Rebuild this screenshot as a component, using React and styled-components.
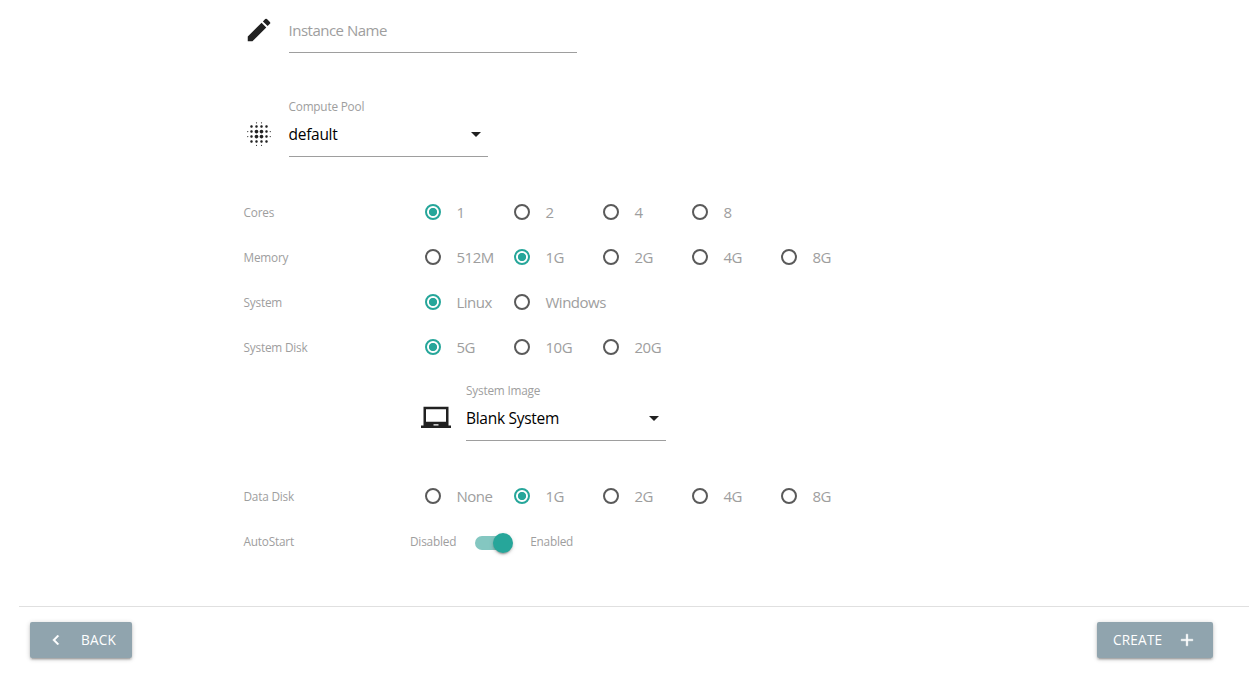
import React, { useState } from "react";
import styled, { createGlobalStyle } from "styled-components";
import { MdAdd, MdBlurOn, MdChevronLeft, MdEdit, MdLaptopChromebook } from "react-icons/md";

const GlobalStyle = createGlobalStyle`
  * { box-sizing: border-box; }
  body {
    margin: 0;
    background: #fff;
    color: #212121;
    font-family: "Open Sans", "Noto Sans", sans-serif;
    overflow: hidden;
  }
`;

const Page = styled.main`
  height: 682px;
  display: flex;
  flex-direction: column;
`;

const Form = styled.form`
  height: 606px;
  padding: 15px 0 0 243.5px;
  display: flex;
  flex-direction: column;
`;

const Field = styled.div`
  display: flex;
  align-items: flex-start;
  gap: 15px;
  height: ${(p) => p.$height}px;
  padding-top: ${(p) => p.$top || 0}px;
  padding-left: ${(p) => p.$indent || 0}px;

  > svg {
    width: 30px;
    height: 30px;
    flex: none;
    margin-top: ${(p) => p.$iconTop || 0}px;
  }
`;

const NameInput = styled.input`
  width: 288px;
  height: 38px;
  padding: 0 0 8px;
  border: 0;
  border-bottom: 1px solid #9e9e9e;
  outline: 0;
  background: transparent;
  font: 15px/20px "Open Sans", sans-serif;
  letter-spacing: -0.5px;
  &::placeholder { color: #9e9e9e; opacity: 1; }
`;

const SelectBox = styled.div`
  width: ${(p) => p.$width}px;
  height: 58px;
  border-bottom: 1px solid #9e9e9e;
`;

const Caption = styled.div`
  height: 16px;
  font-size: 11.8px;
  line-height: 14px;
  letter-spacing: -0.2px;
  color: #9e9e9e;
`;

const SelectValue = styled.div`
  display: flex;
  align-items: flex-start;
  justify-content: space-between;
  height: 24px;
  margin-top: 7px;
  font-size: 15.5px;
  line-height: 24px;
  letter-spacing: -0.28px;
  color: #000;
  svg { width: 24px; height: 24px; fill: #212121; }
`;

const Row = styled.div`
  display: flex;
  align-items: center;
  height: 45px;
`;

const RowLabel = styled.span`
  width: ${(p) => p.$width || 181.5}px;
  padding-bottom: 1px;
  font-size: 11.8px;
  line-height: 16px;
  letter-spacing: -0.2px;
  color: #9e9e9e;
`;

const Option = styled.label`
  display: flex;
  align-items: center;
  gap: 15.5px;
  width: 89px;
  font-size: 15px;
  line-height: 20px;
  white-space: nowrap;
  color: #9e9e9e;
  letter-spacing: -0.5px;
  > span { padding-bottom: 2px; }
`;

const Radio = styled.input`
  appearance: none;
  flex: none;
  width: 16px;
  height: 16px;
  margin: 0 0 2px;
  border: 2px solid #5a5a5a;
  border-radius: 50%;
  &:checked {
    border-color: #26a69a;
    background: radial-gradient(circle, #26a69a 3.7px, transparent 4.5px);
  }
`;

const SwitchText = styled.span`
  padding-bottom: 1px;
  font-size: 11.8px;
  line-height: 16px;
  letter-spacing: -0.2px;
  color: #9e9e9e;
`;

const SwitchTrack = styled.button`
  display: flex;
  align-items: center;
  justify-content: ${(p) => (p.$on ? "flex-end" : "flex-start")};
  width: 36px;
  height: 14px;
  margin: 2px 19px 0;
  padding: 0;
  border: 0;
  border-radius: 15px;
  background: ${(p) => (p.$on ? "#84c7c1" : "rgba(0,0,0,.38)")};
`;

const SwitchThumb = styled.span`
  flex: none;
  width: 20px;
  height: 20px;
  margin: 0 -2px;
  border-radius: 50%;
  background: ${(p) => (p.$on ? "#26a69a" : "#f1f1f1")};
  box-shadow: 0 3px 1px -2px rgba(0,0,0,.2), 0 2px 2px 0 rgba(0,0,0,.14), 0 1px 5px 0 rgba(0,0,0,.12);
`;

const Footer = styled.footer`
  display: flex;
  justify-content: space-between;
  margin-left: 19px;
  padding: 15px 36px 0 11px;
  border-top: 1px solid #e0e0e0;
`;

const Button = styled.button`
  display: flex;
  align-items: center;
  gap: 15px;
  width: ${(p) => p.$width}px;
  height: 36px;
  padding: 0 16px;
  border: 0;
  border-radius: 2px;
  background: #90a4ae;
  color: #fff;
  font: 13.6px/36px "Open Sans", sans-serif;
  letter-spacing: 0.2px;
  white-space: nowrap;
  box-shadow: 0 2px 2px 0 rgba(0,0,0,.14), 0 3px 1px -2px rgba(0,0,0,.12), 0 1px 5px 0 rgba(0,0,0,.2);
  svg { flex: none; width: 20px; height: 20px; }
  svg path[d^="M15"], svg path[d^="M19"] { stroke: #fff; stroke-width: 0.5px; }
`;

function Select({ label, value, width }) {
  return (
    <SelectBox $width={width}>
      <Caption>{label}</Caption>
      <SelectValue>
        {value}
        <svg viewBox="0 0 24 24"><path d="M7 10l5 5 5-5z" /></svg>
      </SelectValue>
    </SelectBox>
  );
}

function RadioRow({ label, options, initial }) {
  const [value, setValue] = useState(initial);
  return (
    <Row>
      <RowLabel>{label}</RowLabel>
      {options.map((o) => (
        <Option key={o}>
          <Radio type="radio" name={label} checked={value === o} onChange={() => setValue(o)} />
          <span>{o}</span>
        </Option>
      ))}
    </Row>
  );
}

export default function App() {
  const [auto, setAuto] = useState(true);
  return (
    <Page>
      <GlobalStyle />
      <Form>
        <Field $height={84}>
          <MdEdit />
          <NameInput placeholder="Instance Name" />
        </Field>
        <Field $height={91} $iconTop={20}>
          <MdBlurOn />
          <Select label="Compute Pool" value="default" width={199} />
        </Field>
        <RadioRow label="Cores" options={["1", "2", "4", "8"]} initial="1" />
        <RadioRow label="Memory" options={["512M", "1G", "2G", "4G", "8G"]} initial="1G" />
        <RadioRow label="System" options={["Linux", "Windows"]} initial="Linux" />
        <RadioRow label="System Disk" options={["5G", "10G", "20G"]} initial="5G" />
        <Field $height={104} $top={13} $indent={177.5} $iconTop={20}>
          <MdLaptopChromebook />
          <Select label="System Image" value="Blank System" width={200} />
        </Field>
        <RadioRow label="Data Disk" options={["None", "1G", "2G", "4G", "8G"]} initial="1G" />
        <Row>
          <RowLabel $width={166.5}>AutoStart</RowLabel>
          <SwitchText>Disabled</SwitchText>
          <SwitchTrack type="button" $on={auto} onClick={() => setAuto(!auto)}>
            <SwitchThumb $on={auto} />
          </SwitchTrack>
          <SwitchText>Enabled</SwitchText>
        </Row>
      </Form>
      <Footer>
        <Button $width={102}><MdChevronLeft />BACK</Button>
        <Button $width={116}>CREATE<MdAdd /></Button>
      </Footer>
    </Page>
  );
}
